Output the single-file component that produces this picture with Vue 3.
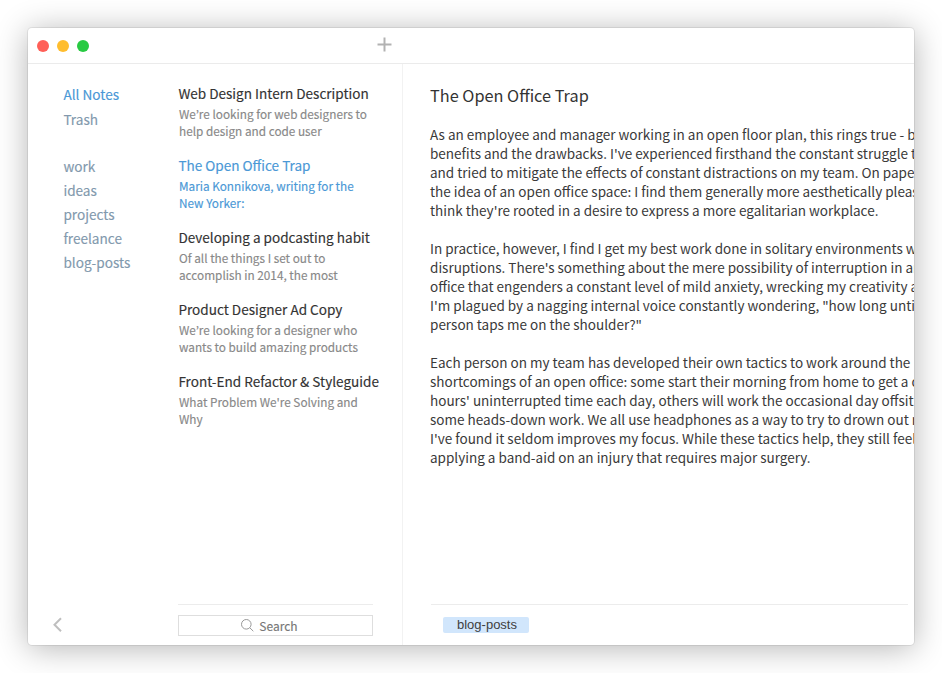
<script setup>
const systemLinks = [
  { label: 'All Notes', active: true },
  { label: 'Trash', active: false },
]
const tags = ['work', 'ideas', 'projects', 'freelance', 'blog-posts']
const notes = [
  { title: 'Web Design Intern Description', lines: ['We’re looking for web designers to', 'help design and code user'] },
  { title: 'The Open Office Trap', lines: ['Maria Konnikova, writing for the', 'New Yorker:'], active: true },
  { title: 'Developing a podcasting habit', lines: ['Of all the things I set out to', 'accomplish in 2014, the most'] },
  { title: 'Product Designer Ad Copy', lines: ['We’re looking for a designer who', 'wants to build amazing products'] },
  { title: 'Front-End Refactor & Styleguide', lines: ["What Problem We're Solving and", 'Why'] },
]
const paragraphs = [
  [
    'As an employee and manager working in an open floor plan, this rings true - b',
    "benefits and the drawbacks. I've experienced firsthand the constant struggle t",
    'and tried to mitigate the effects of constant distractions on my team. On pape',
    'the idea of an open office space: I find them generally more aesthetically pleas',
    "think they're rooted in a desire to express a more egalitarian workplace.",
  ],
  [
    'In practice, however, I find I get my best work done in solitary environments w',
    "disruptions. There's something about the mere possibility of interruption in an",
    'office that engenders a constant level of mild anxiety, wrecking my creativity a',
    'I\'m plagued by a nagging internal voice constantly wondering, "how long unti',
    'person taps me on the shoulder?"',
  ],
  [
    'Each person on my team has developed their own tactics to work around the',
    'shortcomings of an open office: some start their morning from home to get a c',
    "hours' uninterrupted time each day, others will work the occasional day offsit",
    'some heads-down work. We all use headphones as a way to try to drown out r',
    "I've found it seldom improves my focus. While these tactics help, they still feel",
    'applying a band-aid on an injury that requires major surgery.',
  ],
]
</script>

<template>
  <div class="desktop">
    <main class="window">
      <header class="titlebar">
        <div class="lights">
          <i class="light red"></i>
          <i class="light yellow"></i>
          <i class="light green"></i>
        </div>
        <svg class="plus" viewBox="0 0 15 15"><path d="M7.5 0.5V14.5M0.5 7.5H14.5" /></svg>
      </header>
      <div class="panes">
        <nav class="sidebar">
          <div class="system">
            <a v-for="link in systemLinks" :key="link.label" :class="{ active: link.active }">{{ link.label }}</a>
          </div>
          <div class="tags">
            <a v-for="tag in tags" :key="tag">{{ tag }}</a>
          </div>
          <svg class="back" viewBox="0 0 10 16"><path d="M8 1.2L1.5 7.7L8 14.2" /></svg>
        </nav>
        <section class="list">
          <article v-for="note in notes" :key="note.title" class="note" :class="{ active: note.active }">
            <h2>{{ note.title }}</h2>
            <p v-for="line in note.lines" :key="line">{{ line }}</p>
          </article>
          <footer class="list-footer">
            <div class="search">
              <svg viewBox="0 0 13 13"><circle cx="5.3" cy="5.3" r="4.8" /><path d="M8.8 8.8L12.3 12.2" /></svg>
              <span>Search</span>
            </div>
          </footer>
        </section>
        <section class="editor">
          <h1>The Open Office Trap</h1>
          <div v-for="(paragraph, i) in paragraphs" :key="i" class="paragraph">
            <p v-for="line in paragraph" :key="line">{{ line }}</p>
          </div>
          <footer class="editor-footer"><span class="chip">blog-posts</span></footer>
        </section>
      </div>
    </main>
  </div>
</template>

<style>
body { background: #fff; }
</style>

<style scoped>
* { box-sizing: border-box; }
h1, h2, p { margin: 0; font-weight: 400; white-space: nowrap; }
.desktop {
  width: 942px;
  height: 673px;
  padding: 28px;
  overflow: hidden;
  font-family: "Noto Sans CJK KR", "Noto Sans", sans-serif;
  -webkit-text-stroke: 0.15px;
}
.window {
  display: flex;
  flex-direction: column;
  width: 886px;
  height: 617px;
  overflow: hidden;
  border-radius: 4px;
  background: #fff;
  box-shadow: 0 0 0 1px rgba(0, 0, 0, 0.07), 0 3px 32px rgba(0, 0, 0, 0.3);
}
.titlebar {
  display: flex;
  flex: none;
  height: 36px;
  padding: 9px 0 0 9px;
  border-bottom: 1px solid #ebebeb;
}
.lights { display: flex; gap: 8px; width: 340px; padding-top: 2.5px; }
.light { width: 12px; height: 12px; border-radius: 50%; }
.red { background: #ff5f57; }
.yellow { background: #ffbd2e; }
.green { background: #28ca42; }
.plus { width: 15px; height: 15px; fill: none; stroke: #b2b2b2; stroke-width: 2; }
.panes { display: flex; flex: 1; min-height: 0; }
.sidebar {
  display: flex;
  flex-direction: column;
  width: 150px;
  padding: 18px 0 12px 35.4px;
  color: #8299ad;
  font-size: 13.6px;
}
.sidebar a { display: block; line-height: 24px; }
.sidebar a.active { color: #4a98d6; line-height: 25px; }
.tags { flex: 1; padding-top: 23px; }
.back { width: 10px; height: 16px; margin-left: -10.4px; fill: none; stroke: #bfbfbf; stroke-width: 2; }
.list {
  display: flex;
  flex-direction: column;
  width: 224px;
  padding: 19px 0 9px;
}
.note { height: 72px; color: #888; }
.note h2 { margin-bottom: 2px; padding-left: 0.4px; color: #333; font-size: 13.55px; line-height: 20px; }
.note p { padding-left: 1px; font-size: 11.78px; line-height: 17px; }
.note.active, .note.active h2 { color: #4a98d6; }
.list-footer { width: 195px; margin-top: auto; padding-top: 10px; border-top: 1px solid #ececec; }
.search {
  display: flex;
  align-items: center;
  justify-content: center;
  gap: 5px;
  height: 21px;
  padding-right: 12px;
  border: 1px solid #dedede;
  color: #777;
  font-size: 12px;
  line-height: 19px;
}
.search svg { width: 13px; height: 13px; fill: none; stroke: #999; stroke-width: 1; }
.editor {
  display: flex;
  flex: 1;
  flex-direction: column;
  min-width: 0;
  padding: 19px 6px 12px 27px;
  border-left: 1px solid #f2f2f2;
  -webkit-text-stroke: 0;
}
h1 { margin-bottom: 18px; color: #333; font-size: 16.3px; line-height: 24px; }
.paragraph { margin-bottom: 19px; color: #3a3a3a; font-size: 13.52px; line-height: 19px; }
.editor-footer { margin-top: auto; margin-left: 1px; padding: 12px 0 0 12px; border-top: 1px solid #ececec; line-height: 0; }
.chip {
  display: inline-block;
  width: 86px;
  padding-left: 2px;
  border-radius: 2px;
  background: #d1e6fc;
  color: #404040;
  font: 13px/16px "Liberation Sans", sans-serif;
  text-align: center;
}
</style>
